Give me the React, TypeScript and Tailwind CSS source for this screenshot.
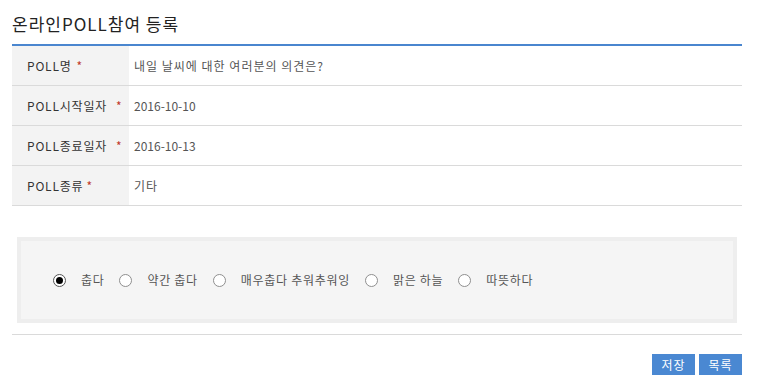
import React from "react";

const rows = [
  { label: "POLL명", gap: "ml-[5px]", value: "내일 날씨에 대한 여러분의 의견은?", ko: true },
  { label: "POLL시작일자", gap: "ml-[9px]", value: "2016-10-10", ko: false },
  { label: "POLL종료일자", gap: "ml-[9px]", value: "2016-10-13", ko: false },
  { label: "POLL종류", gap: "ml-[3px]", value: "기타", ko: true },
];

const options = ["춥다", "약간 춥다", "매우춥다 추워추워잉", "맑은 하늘", "따뜻하다"];

function Radio({ checked }: { checked?: boolean }) {
  return (
    <span
      className={`flex h-[13px] w-[13px] shrink-0 items-center justify-center rounded-full border bg-white ${
        checked ? "border-[#555]" : "border-[#8f8f8f]"
      }`}
    >
      {checked && <span className="h-[7px] w-[7px] rounded-full bg-black" />}
    </span>
  );
}

export default function App() {
  return (
    <div
      className="h-[387px] w-[757px] bg-white px-[12px] pt-[12px] text-[12px] text-[#333]"
      style={{ fontFamily: '"Noto Sans CJK KR", "Noto Sans", sans-serif' }}
    >
      <h1 className="h-[32px] text-[17px] leading-[24px] tracking-[1px] text-[#222]">온라인POLL참여 등록</h1>
      <div className="w-[730px] border-t-2 border-[#4a86cf]">
        {rows.map((r) => (
          <div key={r.label} className="flex h-[40px] border-b border-[#dadada]">
            <div className="flex w-[117px] items-center bg-[#f3f3f3] pl-[15px] text-[#333]">
              <span className="tracking-[0.8px]">{r.label}</span>
              <span className={`${r.gap} text-[#c0392b]`}>*</span>
            </div>
            <div className={`flex items-center pl-[5px] text-[#555] ${r.ko ? "tracking-[1px]" : ""}`}>{r.value}</div>
          </div>
        ))}
      </div>
      <div className="ml-[5px] mt-[31px] h-[86px] w-[720px] border-4 border-[#eeeeee] bg-[#f5f5f5]">
        <div className="flex h-full items-center pl-[32px] text-[#555]">
          {options.map((o, i) => (
            <div key={o} className="flex items-center">
              <Radio checked={i === 0} />
              <span className="ml-[15px] mr-[15px] tracking-[0.7px]">{o}</span>
            </div>
          ))}
        </div>
      </div>
      <div className="mt-[11px] w-[730px] border-t border-[#dadada]" />
      <div className="mt-[19px] flex w-[730px] justify-end gap-[4px]">
        <button className="h-[21px] w-[43px] bg-[#4a88d2] text-[12px] leading-[21px] tracking-[1px] text-white">저장</button>
        <button className="h-[21px] w-[43px] bg-[#4a88d2] text-[12px] leading-[21px] tracking-[1px] text-white">목록</button>
      </div>
    </div>
  );
}
